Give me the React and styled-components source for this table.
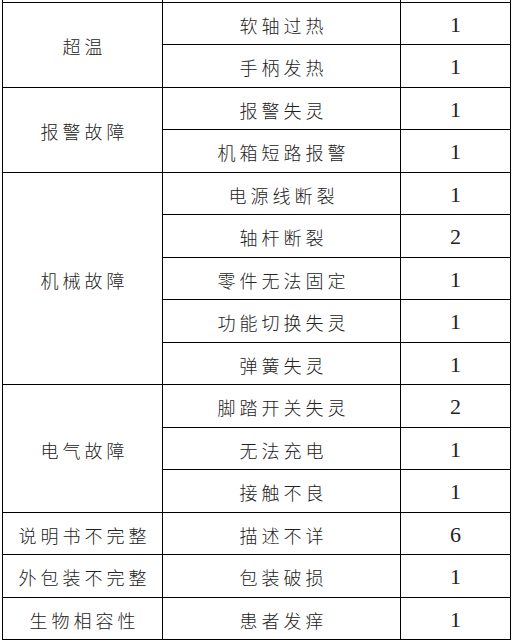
import React from "react";
import styled, { createGlobalStyle } from "styled-components";

// -------- Data --------

const groups = [
  { name: "超温", items: [["软轴过热", 1], ["手柄发热", 1]] },
  { name: "报警故障", items: [["报警失灵", 1], ["机箱短路报警", 1]] },
  {
    name: "机械故障",
    items: [
      ["电源线断裂", 1],
      ["轴杆断裂", 2],
      ["零件无法固定", 1],
      ["功能切换失灵", 1],
      ["弹簧失灵", 1],
    ],
  },
  { name: "电气故障", items: [["脚踏开关失灵", 2], ["无法充电", 1], ["接触不良", 1]] },
  { name: "说明书不完整", items: [["描述不详", 6]] },
  { name: "外包装不完整", items: [["包装破损", 1]] },
  { name: "生物相容性", items: [["患者发痒", 1]] },
];

// -------- Styled Components --------

const GlobalStyle = createGlobalStyle`
  html, body {
    margin: 0;
    padding: 0;
    background: #ffffff;
  }
`;

const Page = styled.div`
  padding: 0 0 0 2px;
  height: 643px;
  overflow: hidden;
`;

const Table = styled.table`
  border-collapse: collapse;
  table-layout: fixed;
  width: 508px;
  font-family: "Noto Sans CJK SC", "Liberation Serif", serif;
  color: #222;
`;

const StubRow = styled.tr`
  height: 2px;

  td {
    border-top: none;
    padding: 0;
  }
`;

const Row = styled.tr`
  height: 42.53px;
`;

const Cell = styled.td`
  border: 1px solid #000;
  padding: 3px 0 0 ${(p) => (p.$num ? 0 : 4)}px;
  text-align: center;
  vertical-align: middle;
  font-size: ${(p) => (p.$num ? 22 : 18)}px;
  font-family: ${(p) =>
    p.$num ? '"Liberation Serif", serif' : '"Noto Sans CJK SC", sans-serif'};
  font-weight: ${(p) => (p.$num ? 400 : 300)};
  letter-spacing: ${(p) => (p.$num ? 0 : 4)}px;
  line-height: 1;
  white-space: nowrap;
`;

// -------- Component --------

export default function App() {
  return (
    <Page>
      <GlobalStyle />
      <Table>
        <colgroup>
          <col style={{ width: 160 }} />
          <col style={{ width: 238 }} />
          <col style={{ width: 110 }} />
        </colgroup>
        <tbody>
          <StubRow>
            <Cell />
            <Cell />
            <Cell />
          </StubRow>
          {groups.map((g) =>
            g.items.map(([label, count], i) => (
              <Row key={g.name + label}>
                {i === 0 && <Cell rowSpan={g.items.length}>{g.name}</Cell>}
                <Cell>{label}</Cell>
                <Cell $num>{count}</Cell>
              </Row>
            ))
          )}
        </tbody>
      </Table>
    </Page>
  );
}
